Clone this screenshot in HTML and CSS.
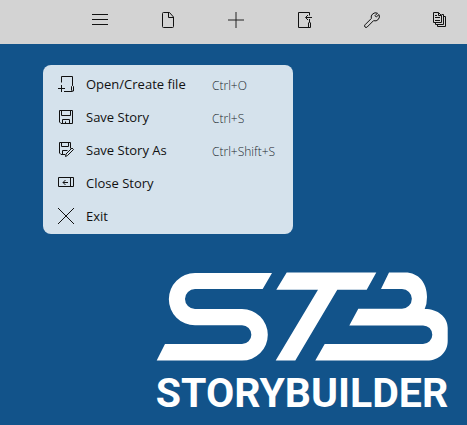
FILE: index.html
```html
<!DOCTYPE html>
<html lang="en">
<head>
<meta charset="utf-8">
<meta name="viewport" content="width=device-width, initial-scale=1">
<title>Storybuilder</title>
<link rel="stylesheet" href="styles.css">
</head>
<body>
<header class="toolbar">
  <button class="tool" aria-label="Menu"><svg class="icon" viewBox="0 0 16 16"><path d="M0 2.5h16M0 7.5h16M0 12.5h16"/></svg></button>
  <button class="tool" aria-label="New"><svg class="icon" viewBox="0 0 16 16"><path d="M3.5.5h6l4 4.5v9.5q0 1-1 1h-9q-1 0-1-1v-13q0-1 1-1zM8.500.5v5h5"/></svg></button>
  <button class="tool" aria-label="Add"><svg class="icon icon-soft" viewBox="0 0 16 16"><path d="M8 0v16M0 8h16"/></svg></button>
  <button class="tool" aria-label="Import"><svg class="icon" viewBox="0 0 16 16"><path d="M13.500 3.500v-3h-11v15h11M13.500 7v3M12.500 15v-4l1-1 1 1v4.500h-2M16 5.500h-6M12 3l-2.500 2.500L12 8"/></svg></button>
  <button class="tool" aria-label="Settings"><svg class="icon" viewBox="0 0 16 16"><path d="M13.500 1.200A4.500 4.500 0 0 0 7.300 6.500L1 12.800a1.500 1.500 0 0 0 2.200 2.200L9.500 8.700a4.500 4.500 0 0 0 5.500-6.200L12.300 5 11 3.700z"/></svg></button>
  <button class="tool" aria-label="Documents"><svg class="icon" viewBox="0 0 16 16"><path d="M1.500.5h5l3 3v7h-8zM6.500.5v3h3M3 3.500h2M3 5.500h5M3 8.500h5M9.500 2.500h2v10h-8v-2M11.500 4.500h2v10h-8v-2"/></svg></button>
</header>
<main class="desk">
  <div class="menu" role="menu" aria-label="File">
    <button class="item" role="menuitem"><svg class="icon" viewBox="0 0 16 16"><path d="M3.500 6.500v-6h11v9M6 15.500h8.500M3.500 9v7M0 12.500h7M13.500 14.500v-4l1-1 1 1v4.500h-2"/></svg><span class="label">Open/Create file</span><kbd class="keys">Ctrl+O</kbd></button>
    <button class="item" role="menuitem"><svg class="icon" viewBox="0 0 16 16"><path d="M1.500 1.500h13v13H3l-1.500-1.500zM3.500 1.500v5h9v-5M4.500 14.500v-4h7v4M7.500 14.500v-2"/></svg><span class="label">Save Story</span><kbd class="keys">Ctrl+S</kbd></button>
    <button class="item" role="menuitem"><svg class="icon" viewBox="0 0 16 16"><path d="M7 12.500H3L1.500 11V.5h11v6M3.500.5v4h7v-4M4.500 12.500v-4h5M7.500 14.500l.5-2.500 6-6 1.500 1.500-6 6z"/></svg><span class="label">Save Story As</span><kbd class="keys">Ctrl+Shift+S</kbd></button>
    <button class="item" role="menuitem"><svg class="icon" viewBox="0 0 16 16"><path d="M.5 2.500h15v9H.5zM12.500 2.500v9M10 7.500H5M7.500 5L5 7.500 7.500 10"/></svg><span class="label">Close Story</span></button>
    <button class="item" role="menuitem"><svg class="icon" viewBox="0 0 16 16"><path d="M0 0l16 16M16 0L0 16"/></svg><span class="label">Exit</span></button>
  </div>
  <div class="brand">
    <svg class="mark" viewBox="156 272 292 89" role="img" aria-label="STB">
      <path d="M272 273H195A26 26 0 0 0 195 325.300H242A9.300 9.300 0 0 1 242 344H165L156.700 360.600H242A25.800 25.800 0 0 0 242 309H195A10 10 0 0 1 195 289H262.700z"/>
      <path d="M286.700 272.400H376.300L366.700 289.700H337.300L295.300 360.600H275.700L318 289.700H276.300z"/>
      <path d="M389 272.400H405C419 272.400 427 283 427 297Q427 304 424.700 309C438 309 447.700 317 447.700 328V341C447.700 352 439 360.600 427 360.600H315.300L324.700 344H423A9.300 9.300 0 0 0 423 325.400H349.300L358.300 308.700H402A9.800 9.800 0 0 0 402 289H381z"/>
    </svg>
    <div class="name">STORYBUILDER</div>
  </div>
</main>
</body>
</html>
```
FILE: styles.css
```css
* {
  box-sizing: border-box;
}

body {
  margin: 0;
  min-height: 100vh;
  background: #12538a;
  color: #111;
  font-family: "Open Sans", "Noto Sans", sans-serif;
  font-size: 13px;
}

button {
  margin: 0;
  padding: 0;
  border: 0;
  background: none;
  color: inherit;
  font: inherit;
  text-align: left;
}

.icon {
  display: block;
  flex: none;
  width: 16px;
  height: 16px;
  fill: none;
  stroke: #111;
  stroke-width: 1;
}

.icon-soft {
  stroke: #222;
}

.toolbar {
  display: flex;
  align-items: center;
  justify-content: space-between;
  height: 44px;
  padding: 0 19px 4px 92px;
  background: #d3d3d3;
}

.desk {
  display: flex;
  flex-direction: column;
  align-items: flex-start;
  padding: 21px 19px 8px 43px;
}

.menu {
  width: 250px;
  padding: 2px 0;
  border-radius: 8px;
  background: #d5e2ec;
}

.item {
  display: grid;
  grid-template-columns: 16px 114px 1fr;
  align-items: center;
  column-gap: 12px;
  width: 100%;
  height: 33px;
  padding-left: 15px;
}

.label,
.keys {
  white-space: nowrap;
}

.keys {
  padding-top: 3px;
  color: #22282c;
  font-family: inherit;
  font-size: 12px;
  font-weight: 300;
}

.brand {
  align-self: flex-end;
  width: 292px;
  margin-top: 38px;
}

.mark {
  display: block;
  width: 100%;
  fill: #fff;
}

.name {
  display: flex;
  justify-content: center;
  margin-top: 9px;
  color: #fff;
  font-family: "Roboto", sans-serif;
  font-size: 41px;
  font-weight: 700;
  line-height: 46px;
}
```
